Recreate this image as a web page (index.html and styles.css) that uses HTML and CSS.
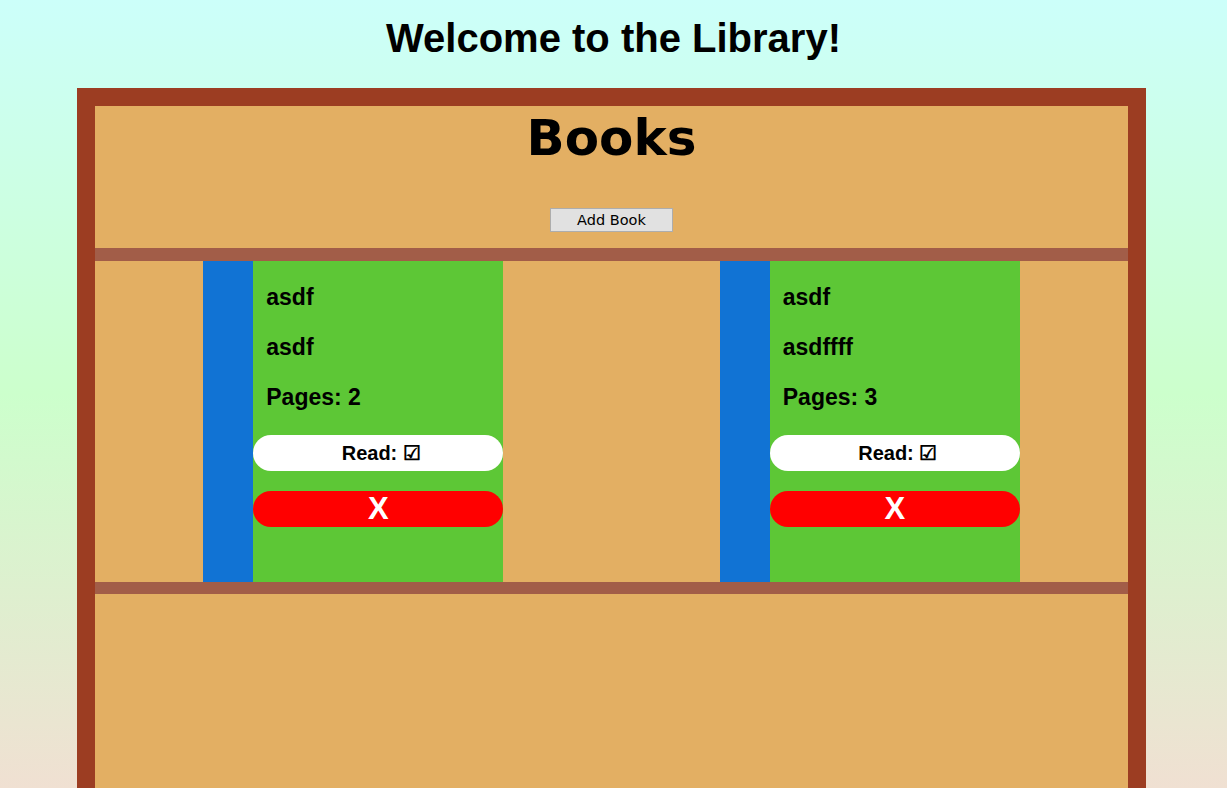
FILE: index.html
```html
<!DOCTYPE html>
<html>
<head>
<meta charset="utf-8">
<title>Library</title>
<link rel="stylesheet" href="styles.css">
</head>
<body>
<h1 class="title">Welcome to the Library!</h1>
<div class="library">
  <div class="header">
    <h2 class="books-title">Books</h2>
    <button class="add-btn">Add Book</button>
  </div>
  <div class="shelf">
    <div class="book">
      <div class="spine"></div>
      <div class="cover">
        <p class="line">asdf</p>
        <p class="line">asdf</p>
        <p class="line">Pages: 2</p>
        <button class="read-btn">Read: ☑</button>
        <button class="del-btn">X</button>
      </div>
    </div>
    <div class="book">
      <div class="spine"></div>
      <div class="cover">
        <p class="line">asdf</p>
        <p class="line">asdffff</p>
        <p class="line">Pages: 3</p>
        <button class="read-btn">Read: ☑</button>
        <button class="del-btn">X</button>
      </div>
    </div>
  </div>
  <div class="rest"></div>
</div>
</body>
</html>
```
FILE: styles.css
```css
html, body {
  margin: 0;
  padding: 0;
}
body {
  min-height: 788px;
  background: linear-gradient(to bottom, #ccfffa 0%, #ccffcc 50%, #f0e0d2 100%);
  font-family: "Liberation Sans", Arial, sans-serif;
  overflow: hidden;
}
.title {
  margin: 0;
  padding-top: 15px;
  height: 88px;
  box-sizing: border-box;
  text-align: center;
  font-size: 40px;
  font-weight: bold;
  line-height: 46px;
  color: #000;
}
.library {
  margin-left: 77px;
  width: 1069px;
  box-sizing: border-box;
  border: 18px solid #9c3d22;
  border-bottom: none;
  background: #e3af63;
  height: 700px;
}
.header {
  height: 142px;
  display: flex;
  flex-direction: column;
  align-items: center;
}
.books-title {
  margin: 3px 0 0 0;
  font-family: "DejaVu Sans", Verdana, sans-serif;
  font-size: 50px;
  font-weight: bold;
  line-height: 58px;
}
.add-btn {
  margin-top: 41px;
  width: 123px;
  height: 24px;
  background: #e1e1e1;
  border: 1px solid #adadad;
  font-family: "DejaVu Sans", Tahoma, sans-serif;
  font-size: 14.5px;
  color: #000;
  padding: 0;
}
.shelf {
  border-top: 13px solid #a25d48;
  border-bottom: 12px solid #a25d48;
  height: 321px;
  display: flex;
  justify-content: space-around;
}
.book {
  display: flex;
  width: 300px;
}
.spine {
  width: 50px;
  background: #1173d4;
}
.cover {
  width: 250px;
  background: #5dc736;
  display: flex;
  flex-direction: column;
}
.line {
  margin: 0;
  padding-left: 13px;
  padding-top: 25px;
  height: 50px;
  box-sizing: border-box;
  font-size: 23px;
  font-weight: bold;
  line-height: 22px;
}
.read-btn, .del-btn {
  border: none;
  border-radius: 18px;
  height: 36px;
  width: 250px;
  font-family: "Liberation Sans", Arial, sans-serif;
  font-weight: bold;
  padding: 0;
}
.read-btn {
  margin-top: 24px;
  background: #fff;
  color: #000;
  font-size: 20px;
  padding-left: 6px;
}
.del-btn {
  margin-top: 20px;
  background: #ff0000;
  color: #fff;
  font-size: 31px;
}
```
